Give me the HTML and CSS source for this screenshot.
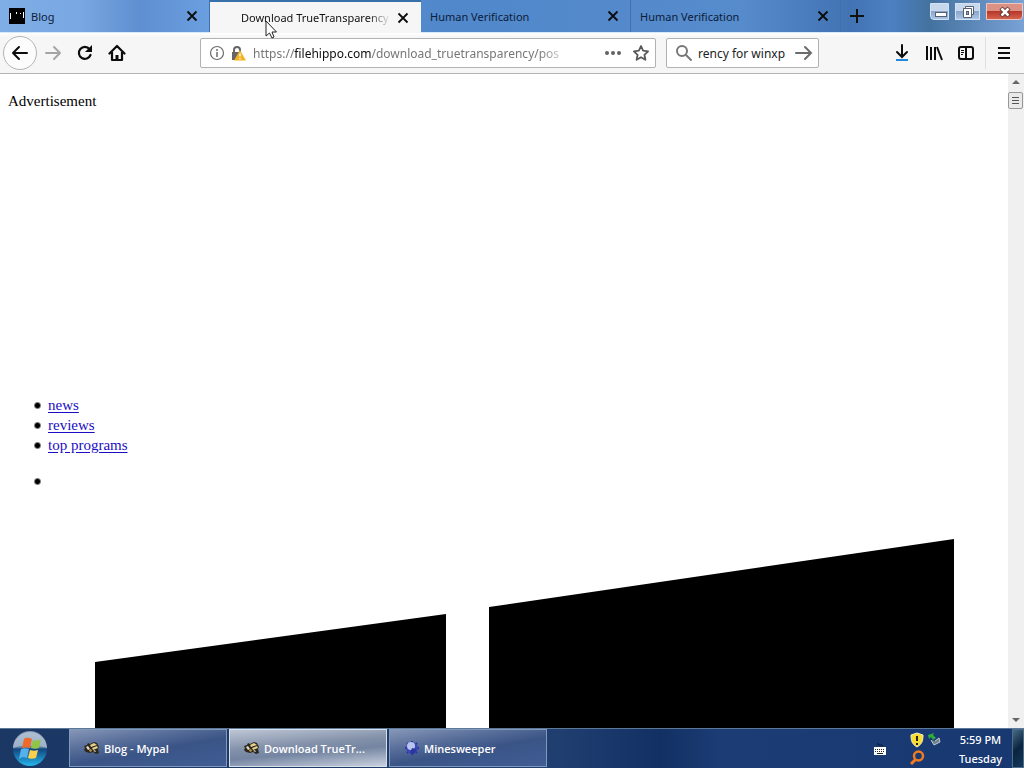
FILE: index.html
```html
<!DOCTYPE html>
<html lang="en">
<head>
    <meta charset="UTF-8">
    <meta name="viewport" content="width=device-width, initial-scale=1.0">
    <title>Download TrueTransparency</title>
    <link rel="stylesheet" href="styles.css">
</head>
<body>
    <!-- shared icons -->
    <svg class="defs" aria-hidden="true">
        <defs>
            <symbol id="close" viewBox="0 0 12 12"><path d="M1.500 1.500l9 9M10.500 1.500l-9 9" stroke="currentColor" stroke-width="1.800" fill="none"/></symbol>
            <symbol id="mypal" viewBox="0 0 16 16">
                <path d="M0 6l3-1 1-2 2 1 4-2 3 1 2 4-1 2 1 4-3 1-3-2-3 1-4-1-2-2 1-2z" fill="#2b281f"/>
                <path d="M6 5l4-2 3 2-6 2zM8 8l5-2 1 2-5 2z" fill="#e8cf8c"/>
                <path d="M2 7l2-1 2 3-2 1zM9 11l2-1 1 2z" fill="#e6dcc0"/>
                <path d="M5 10l2-1 1 2-2 1z" fill="#c99a45"/>
            </symbol>
        </defs>
    </svg>

    <header class="browser">
        <div class="tabbar">
            <div class="tab">
                <svg class="favicon" viewBox="0 0 16 16"><path d="M0 0h16v16H0z"/><path d="M1.500 5v6M7.500 4v2M11.500 5v1M14.500 4v6" stroke="#fff"/></svg>
                <span class="tab-title">Blog</span>
                <button class="tab-close" aria-label="Close Blog"><svg width="12" height="12"><use href="#close"/></svg></button>
            </div>
            <div class="tab active">
                <span class="favicon"></span>
                <span class="tab-title">Download TrueTransparency (</span>
                <button class="tab-close" aria-label="Close Download"><svg width="12" height="12"><use href="#close"/></svg></button>
            </div>
            <div class="tab">
                <span class="tab-title">Human Verification</span>
                <button class="tab-close" aria-label="Close tab"><svg width="12" height="12"><use href="#close"/></svg></button>
            </div>
            <div class="tab">
                <span class="tab-title">Human Verification</span>
                <button class="tab-close" aria-label="Close tab"><svg width="12" height="12"><use href="#close"/></svg></button>
            </div>
            <button class="new-tab" aria-label="New tab"><svg width="16" height="16"><path d="M8 1v14M1 8h14" stroke="#111" stroke-width="2"/></svg></button>
            <div class="window-buttons">
                <button class="win-btn" aria-label="Minimize"><svg width="14" height="14"><rect x="2.500" y="7.500" width="11" height="4" fill="#fff" stroke="#555f70"/></svg></button>
                <button class="win-btn wide" aria-label="Restore"><svg width="14" height="14"><path d="M4.500 1.500h8v8h-2v3h-8v-9h2z" fill="#fff" stroke="#555f70"/><path d="M2.500 3.500h8v7" fill="none" stroke="#555f70"/><rect x="5.500" y="6.500" width="2" height="3" fill="#8fa7c8" stroke="#555f70"/></svg></button>
                <button class="win-btn win-close" aria-label="Close"><svg width="14" height="14"><path d="M3 3l8 8M11 3l-8 8" stroke="#5b3030" stroke-width="4.500"/><path d="M3.500 3.500l7 7M10.500 3.500l-7 7" stroke="#fff" stroke-width="2.500"/></svg></button>
            </div>
        </div>

        <nav class="toolbar">
            <button class="tool back" aria-label="Back"><svg width="18" height="18"><path d="M16 9H2M8 3L2 9l6 6" fill="none" stroke="#0c0c0d" stroke-width="2" stroke-linecap="round" stroke-linejoin="round"/></svg></button>
            <button class="tool" aria-label="Forward"><svg width="18" height="18"><path d="M2 9h14M10 3l6 6-6 6" fill="none" stroke="#a5a5a6" stroke-width="2" stroke-linecap="round" stroke-linejoin="round"/></svg></button>
            <button class="tool" aria-label="Reload"><svg width="18" height="18"><path d="M14.500 11A6 6 0 1 1 13.500 5" fill="none" stroke="#0c0c0d" stroke-width="2.200" stroke-linecap="round"/><path d="M16 1v7H9z" fill="#0c0c0d"/></svg></button>
            <button class="tool" aria-label="Home"><svg width="18" height="18"><path d="M1.500 9.500L9 2l7.500 7.500M4 8v8h10V8" fill="none" stroke="#0c0c0d" stroke-width="2.200" stroke-linecap="round" stroke-linejoin="round"/><path d="M7.500 16v-5h3v5z" fill="#0c0c0d"/></svg></button>

            <div class="url-box">
                <svg width="16" height="16"><circle cx="8" cy="8" r="6.500" fill="none" stroke="#6b6b6e" stroke-width="1.200"/><path d="M8 7v5M8 4v2" stroke="#6b6b6e" stroke-width="1.500"/></svg>
                <svg width="16" height="16"><path d="M4 7V5a3 3 0 0 1 6 0v2" fill="none" stroke="#666" stroke-width="2"/><path d="M2 7h9v8H2z" fill="#666"/><path d="M10 5l6 10.500H4z" fill="#f5b323"/><path d="M10 8.500v3M10 13v1.300" stroke="#fff" stroke-width="1.400"/></svg>
                <a class="url" href="#">https://<b>filehippo.com</b>/download_truetransparency/pos</a>
                <button class="small-btn" aria-label="Page actions"><svg width="18" height="16"><g fill="#626264"><circle cx="3" cy="8" r="2"/><circle cx="9" cy="8" r="2"/><circle cx="15" cy="8" r="2"/></g></svg></button>
                <button class="small-btn" aria-label="Bookmark"><svg width="18" height="18"><path d="M9 2l2.100 4.700 5 .6-3.700 3.500 1 5L9 13.300l-4.400 2.500 1-5-3.700-3.500 5-.6z" fill="none" stroke="#59595b" stroke-width="1.800" stroke-linejoin="round"/></svg></button>
            </div>

            <div class="search-box">
                <svg width="18" height="18"><circle cx="7" cy="7" r="5" fill="none" stroke="#777" stroke-width="2"/><path d="M11 11l5 5" stroke="#777" stroke-width="2" stroke-linecap="round"/></svg>
                <input class="search" type="text" aria-label="Search" value="rency for winxp">
                <button class="small-btn" aria-label="Search now"><svg width="18" height="18"><path d="M1 9h15M10 3l6 6-6 6" fill="none" stroke="#6b6b6d" stroke-width="2" stroke-linecap="round"/></svg></button>
            </div>

            <div class="toolbar-end">
                <button class="tool" aria-label="Downloads"><svg width="18" height="18"><path d="M9 1v11M4 8l5 5 5-5" fill="none" stroke="#0c0c0d" stroke-width="2" stroke-linecap="round"/><path d="M3 16h12" stroke="#2389df" stroke-width="2"/></svg></button>
                <button class="tool" aria-label="Library"><svg width="18" height="18"><path d="M2 2v14M6 3v13M10 3v13M12 3l5 13" fill="none" stroke="#0c0c0d" stroke-width="2"/></svg></button>
                <button class="tool" aria-label="Sidebars"><svg width="18" height="18"><rect x="2" y="3" width="14" height="12" rx="2" fill="none" stroke="#0c0c0d" stroke-width="2"/><path d="M9 3v12" stroke="#0c0c0d" stroke-width="2"/><path d="M4 6.500h3M4 8.500h3M4 10.500h2" stroke="#0c0c0d"/></svg></button>
                <button class="tool menu" aria-label="Menu"><svg width="18" height="18"><path d="M3 4h12M3 9h12M3 14h12" stroke="#0c0c0d" stroke-width="2"/></svg></button>
            </div>
        </nav>
    </header>

    <div class="viewport">
        <main class="page">
            <div class="ad">Advertisement</div>
            <ul>
                <li><a href="#">news</a></li>
                <li><a href="#">reviews</a></li>
                <li><a href="#">top programs</a></li>
            </ul>
            <ul>
                <li>&nbsp;
                    <svg class="logo" viewBox="0 0 952 500"><path d="M47 171l351-48v377H47zM441 116l465-68v452H441z"/></svg>
                </li>
            </ul>
        </main>
        <div class="scrollbar">
            <svg width="16" height="16"><path d="M4 10l4-4 4 4z" fill="#666"/></svg>
            <div class="thumb"></div>
            <svg class="down" width="16" height="16"><path d="M4 6l4 4 4-4z" fill="#666"/></svg>
        </div>
    </div>

    <footer class="taskbar">
        <button class="start" aria-label="Start">
            <svg width="36" height="36" viewBox="0 0 36 36">
                <defs>
                    <linearGradient id="orb" x1="0" y1="0" x2="0" y2="1"><stop offset="0" stop-color="#8ea6bf"/><stop offset=".45" stop-color="#5d7fa6"/><stop offset=".5" stop-color="#12477f"/><stop offset="1" stop-color="#25b6ec"/></linearGradient>
                </defs>
                <circle cx="18" cy="18" r="17" fill="url(#orb)"/>
                <path d="M1 17a17 17 0 0 1 34 0c-8-3-26-3-34 0z" fill="#c4d0dd" opacity=".6"/>
                <path d="M12 8c3-2 5-1 8 0l-2 9c-3-1-5-1-8 0z" fill="#ee6a2c"/>
                <path d="M21 9c3 1 5 1 8-1l-2 9c-3 1-5 1-8 0z" fill="#91c544"/>
                <path d="M9 18c3-1 5-1 8 0l-2 9c-3-1-5-1-8 1z" fill="#55b1ee"/>
                <path d="M18 19c3 1 5 1 8 0l-2 8c-3 1-6 1-8 0z" fill="#fdd04b"/>
            </svg>
        </button>
        <button class="task"><svg width="16" height="16"><use href="#mypal"/></svg><span>Blog - Mypal</span></button>
        <button class="task current"><svg width="16" height="16"><use href="#mypal"/></svg><span>Download TrueTr...</span></button>
        <button class="task"><svg width="16" height="16"><path d="M8 1v14M1 8h14M3 3l10 10M13 3L3 13" stroke="#2a32a0" stroke-width="2"/><circle cx="8" cy="8" r="6" fill="#3c48b4"/><circle cx="7" cy="6" r="4" fill="#b9c3ee"/><path d="M8 8l5 1-3 5-4-1z" fill="#2d359e"/></svg><span>Minesweeper</span></button>
        <div class="tray">
            <svg class="keyboard" width="14" height="14"><path d="M5 1v2h4v2" fill="none" stroke="#0b1733"/><path d="M1 5h12v8H1z" fill="#fff"/><path d="M2 7.500h10M2 9.500h10" stroke="#222" stroke-dasharray="1 1"/><path d="M4 11.500h6" stroke="#222"/></svg>
            <div class="tray-icons">
                <svg width="16" height="16"><path d="M8 1l6 2c0 6-1 9-6 12C3 12 2 9 2 3z" fill="#f8dc32" stroke="#f4efbd"/><path d="M8 4v5M8 11v2" stroke="#222" stroke-width="2"/></svg>
                <svg width="16" height="16"><path d="M4 8l3 5 6-3-1-4-4 3" fill="#6f8391" stroke="#bdc8d0"/><path d="M1 3l6-2-1 2 3 3-3 2-2-3-2 2z" fill="#2fae3d"/></svg>
                <svg width="16" height="16"><circle cx="9.500" cy="6" r="4.500" fill="none" stroke="#f47a20" stroke-width="2.500"/><path d="M7 9l-5 5" stroke="#f47a20" stroke-width="3"/></svg>
            </div>
            <div class="clock"><span>5:59 PM</span><span>Tuesday</span></div>
            <button class="show-desktop" aria-label="Show desktop"></button>
        </div>
    </footer>

    <svg class="cursor" width="12" height="19"><path d="M1 1v15l3.500-3 2.500 5 2-1-2-5h4.500z" fill="#fff" stroke="#222"/></svg>
</body>
</html>
```
FILE: styles.css
```css
* {
    box-sizing: border-box;
}
body {
    margin: 0;
    height: 100vh;
    display: flex;
    flex-direction: column;
    overflow: hidden;
    background: #fff;
    font-family: "Noto Sans", "Open Sans", sans-serif;
    color: #000;
}
svg {
    display: block;
    flex: none;
}
button {
    border: 0;
    padding: 0;
    background: none;
    font: inherit;
    color: inherit;
}
.defs {
    position: absolute;
    width: 0;
    height: 0;
}

/* tabs */
.browser {
    flex: none;
}
.tabbar {
    display: flex;
    height: 33px;
    background: linear-gradient(90deg, #7fade5 0, #79a7e2 80px, #5f8fd0 140px, #6b9fe0 210px, #5088cb 440px, #568bcc 740px, #4273b3 850px, #4b80c2 890px, #44729f 930px, #79a2d6 1024px);
    border-bottom: 1px solid #d7e8fa;
}
.tab {
    display: flex;
    align-items: center;
    flex: 0 1 210px;
    min-width: 0;
    padding: 0 11px 0 9px;
    gap: 6px;
    border-right: 1px solid #3f6fae;
    color: #0c1c38;
    font-size: 11px;
}
.tab.active {
    flex-basis: 211px;
    height: 33px;
    padding-right: 12px;
    background: #f6f6f7;
    border-top: 2px solid #3870a9;
    border-right: 0;
}
.favicon {
    width: 16px;
    height: 16px;
    flex: none;
}
.tab-title {
    flex: 1;
    overflow: hidden;
    white-space: nowrap;
}
.active .tab-title {
    color: #111;
    mask-image: linear-gradient(90deg, #000 85%, transparent);
}
.tab-close {
    color: #0c0c0d;
}
.new-tab {
    padding: 0 8px;
}
.window-buttons {
    display: flex;
    gap: 6px;
    margin-left: auto;
    padding: 3px 1px 0 0;
}
.win-btn {
    display: flex;
    align-items: center;
    justify-content: center;
    width: 19px;
    height: 17px;
    border: 1px solid #d3e3f5;
    border-radius: 0 0 0 4px;
    background: linear-gradient(#c8d8ec 45%, #8aa6ca 50%, #a9c4e4);
}
.win-btn.wide {
    width: 25px;
    border-radius: 0;
}
.win-btn.win-close {
    width: 37px;
    border-color: #efc5c0;
    border-radius: 0 0 4px 0;
    background: linear-gradient(#dc9185 45%, #b8382a 50%, #d4624c);
}

/* navigation */
.toolbar {
    display: flex;
    align-items: center;
    height: 41px;
    padding: 0 3px;
    background: linear-gradient(#fff, #f6f6f7 4px);
    border-bottom: 1px solid #b3b3b5;
}
.tool {
    display: flex;
    align-items: center;
    justify-content: center;
    width: 32px;
    height: 32px;
}
.tool.back {
    width: 34px;
    height: 34px;
    border: 1px solid #b4b4b5;
    border-radius: 50%;
    background: #fcfcfc;
}
.url-box,
.search-box {
    display: flex;
    align-items: center;
    height: 30px;
    border: 1px solid #b2b2b4;
    border-radius: 2px;
    background: #fff;
    font-size: 12px;
}
.url-box {
    flex: 1;
    min-width: 0;
    margin-left: 67px;
    padding: 0 5px 0 8px;
    gap: 5px;
}
.url {
    flex: 1;
    overflow: hidden;
    white-space: nowrap;
    color: #77777a;
    text-decoration: none;
    margin: 0 28px 0 2px;
    mask-image: linear-gradient(90deg, #000 90%, transparent);
}
.url b {
    font-weight: normal;
    color: #0c0c0d;
}
.url-box .small-btn + .small-btn {
    margin-left: 5px;
}
.search-box {
    width: 153px;
    margin-left: 10px;
    padding: 0 5px 0 8px;
    gap: 5px;
}
.search {
    flex: 1;
    min-width: 0;
    border: 0;
    padding: 0;
    background: none;
    font: inherit;
    color: #222;
}
.toolbar-end {
    display: flex;
    margin-left: 67px;
}
.tool.menu {
    width: 36px;
    margin-left: 3px;
    border-left: 1px solid #e0e0e2;
}

/* page */
.viewport {
    flex: 1;
    min-height: 0;
    display: flex;
}
.page {
    flex: 1;
    overflow: hidden;
    padding: 17px 8px 0;
    font: 15px/20px "Liberation Serif", serif;
}
.ad {
    height: 288px;
}
.page ul {
    margin: 16px 0;
    padding-left: 26px;
    list-style: none;
}
.page li {
    padding-left: 14px;
    background: radial-gradient(circle, #000 2px, transparent 4px) 0 7px / 7px 7px no-repeat;
}
.page a {
    color: #1a0dc4;
    text-underline-offset: 2px;
}
.logo {
    width: 100%;
}
.scrollbar {
    display: flex;
    flex-direction: column;
    flex: none;
    width: 16px;
    background: #f0f0f0;
}
.thumb {
    width: 15px;
    height: 17px;
    margin-top: 2px;
    border: 1px solid #979797;
    border-radius: 2px;
    background: repeating-linear-gradient(#555 0 1px, transparent 1px 3px) center / 7px 7px no-repeat #e9e9e9;
}
.down {
    margin-top: auto;
}

/* taskbar */
.taskbar {
    display: flex;
    flex: none;
    height: 40px;
    border-top: 1px solid #5d7797;
    background: linear-gradient(90deg, #1b3764, #203e70 560px, #123063 660px, #1b3c75 720px, #173871);
    color: #fff;
    font-size: 11px;
}
.start {
    width: 69px;
    padding-left: 12px;
}
.task {
    display: flex;
    align-items: center;
    flex: 0 1 158px;
    min-width: 0;
    height: 38px;
    gap: 4px;
    margin-right: 2px;
    padding: 0 14px;
    border: 1px solid #8199bd;
    background: linear-gradient(170deg, #8696b6, #5a709b 30%, #3a5486 55%, #405d94);
    font-family: "Open Sans", "Noto Sans", sans-serif;
    font-weight: 600;
    white-space: nowrap;
}
.task.current {
    border-color: #d8e0ea;
    background: linear-gradient(175deg, #bdc6d5, #8492aa 40%, #7485a2 60%, #c8d0dd);
}
.tray {
    display: flex;
    align-items: center;
    margin-left: auto;
}
.keyboard {
    margin-right: 22px;
}
.tray-icons {
    display: grid;
    grid-template-columns: 16px 16px;
    gap: 2px;
    margin-right: 16px;
}
.clock {
    display: flex;
    flex-direction: column;
    align-items: center;
    line-height: 19px;
    margin-right: 10px;
    font-weight: 500;
}
.show-desktop {
    width: 12px;
    height: 39px;
    border: 1px solid #4c6d8c;
    background: linear-gradient(135deg, #496b84, #0a2440 50%, #14385a);
}

.cursor {
    position: absolute;
    left: 265px;
    top: 20px;
}
```
